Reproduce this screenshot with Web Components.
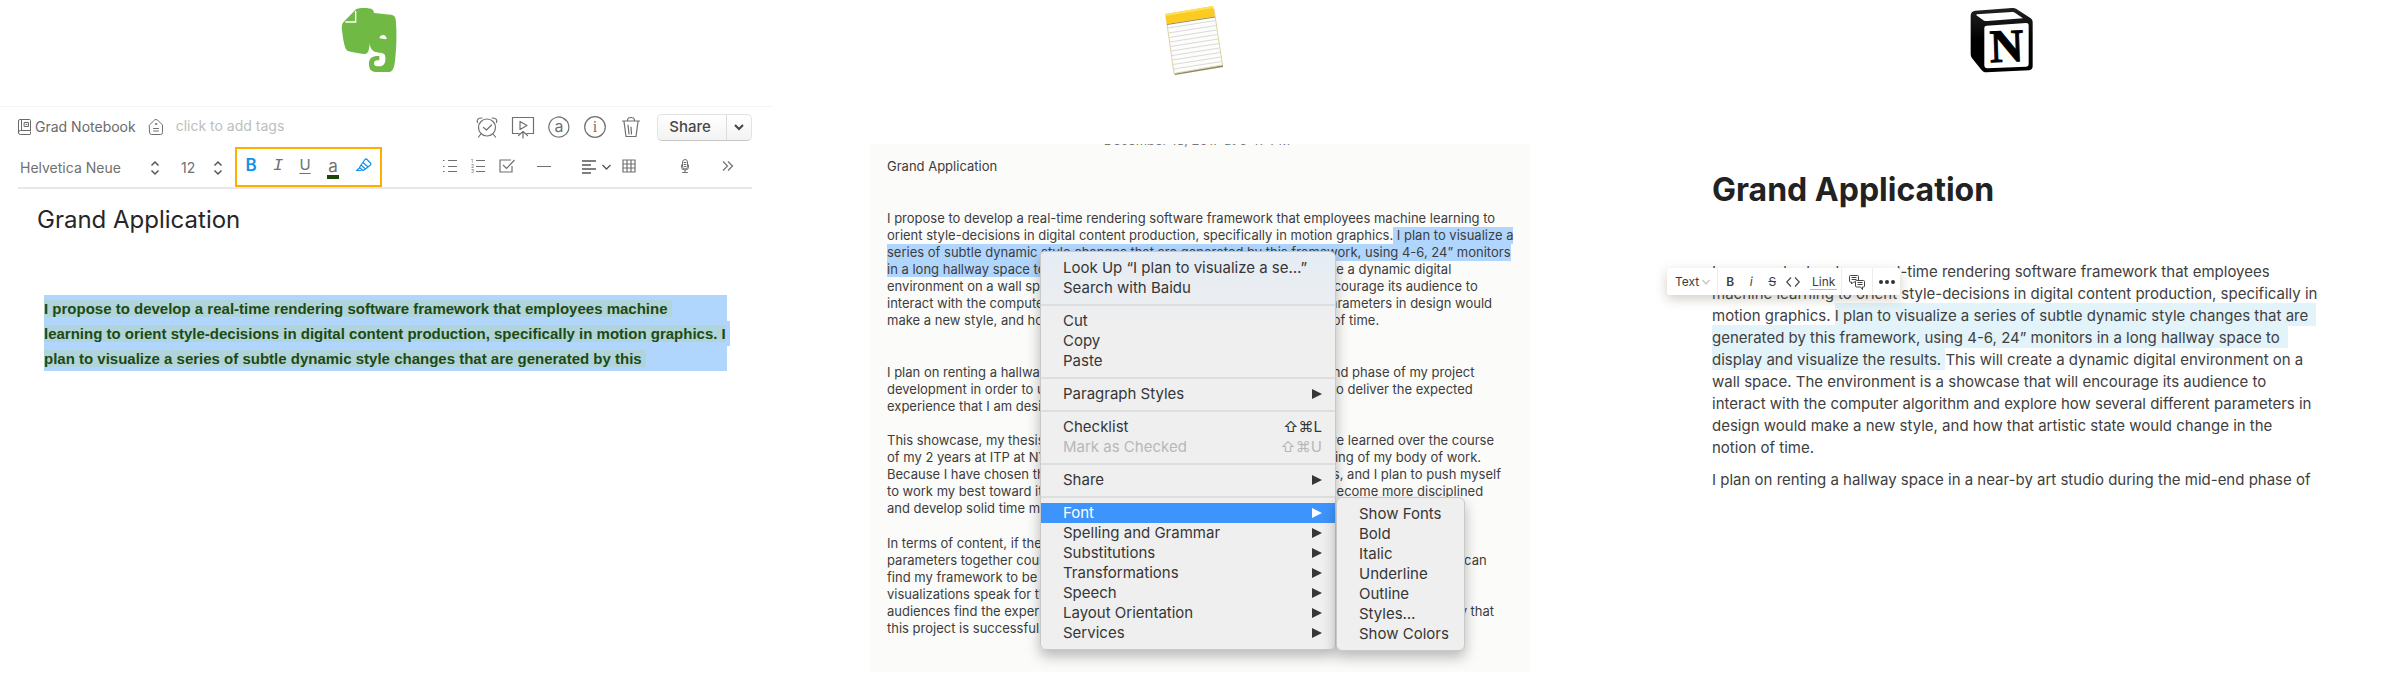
<!DOCTYPE html>
<html lang="en">
<head>
<meta charset="utf-8">
<title>Text formatting in three note apps</title>
<style>
  body { margin: 0; background: #fff; font-family: Inter, "Liberation Sans", sans-serif; color: #333; }
</style>
</head>
<body>
<compare-board>
  <app-column style="--logo-shift: 35px">
    <ui-icon slot="logo" name="evernote"></ui-icon>
    <evernote-pane></evernote-pane>
  </app-column>
  <app-column style="--logo-shift: 10px">
    <ui-icon slot="logo" name="notes"></ui-icon>
    <notes-pane></notes-pane>
  </app-column>
  <app-column style="--logo-shift: 24px">
    <ui-icon slot="logo" name="notion"></ui-icon>
    <notion-pane></notion-pane>
  </app-column>
</compare-board>

<script>
const line = 'fill="none" stroke="currentColor" stroke-linecap="round" stroke-linejoin="round"';
const ICONS = {
  evernote: [58, 66, '60 20 174 198', `
    <path fill="#6fb944" d="M108 27C118 22 150 22 158 28C162 32 161 36 163 38L212 43C224 45 227 50 228 66C230 100 230 135 226 172C223 205 219 215 203 215H172C152 215 147 206 147 190C147 172 158 166 178 167V180C165 179 162 184 162 190C163 196 167 198 174 198C192 199 197 190 196 170C195 160 190 158 178 157C160 155 151 150 149 128C148 146 146 161 134 161C116 160 98 156 84 152C74 148 70 120 67 98C65 82 64 74 70 66Z"/>
    <path fill="none" stroke="#fff" stroke-width="4" d="M76 65H107V32"/>
    <path fill="#fff" d="M178 114C180 100 200 100 200 116C194 118 184 113 178 114Z"/>`],
  notes: [60, 76, '0 3 60 76', `
    <path fill="#8d8768" d="M9 74L58 66L58 68L10 76Z"/>
    <path fill="#fdfdfc" stroke="#dcd3a4" stroke-width="1" d="M1 18L49 10L57.500 66L9 74.500Z"/>
    <path fill="#fbcb1f" d="M0 15L48 7L50 17.500L2 25Z"/>
    <path fill="#ffdf5e" d="M0 15L48 7L48.500 9L.500 17Z"/>
    <path stroke="#dadada" stroke-width="1" d="M3 29L50.500 21.500M3.500 34L51 26.500M4 38.500L51.500 31M5 43L52.500 35.500M5.500 47.500L53 40M6 52L54 44.500M7 56.500L54.500 49M7.500 61L55 53.500M8 65.500L56 58M8.500 70L56.500 62.500"/>
    <path stroke="#9a8c4c" stroke-width="1" d="M2 25.500L50 18"/>`],
  notion: [64, 66, '58 14 192 198', `
    <defs><linearGradient id="side" x1="0" y1="0" x2="0" y2="1"><stop offset="0" stop-color="#222"/><stop offset=".5" stop-color="#000"/></linearGradient></defs>
    <path fill="url(#side)" d="M74 25L184 17C192 17 196 19 202 23L238 46C244 50 246 53 246 60V192C246 199 242 203 235 204L108 210C100 210 96 207 92 202L66 170C61 164 60 160 60 153V40C60 31 65 26 74 25Z"/>
    <path fill="#fff" d="M78 36L184 29C190 29 193 31 197 34L217 48L110 56C103 57 98 55 94 51L77 39Z"/>
    <path fill="#fff" d="M108 70L226 62C232 62 234 64 234 70V184C234 190 231 193 226 193L110 198C104 198 101 195 101 189V78C101 73 103 70 108 70Z"/>
    <text x="117" y="178" font-family="Liberation Serif" font-weight="700" font-size="140" fill="#000" stroke="#000" stroke-width="3" transform="rotate(-2 167 130)">N</text>`],
  notebook: [14, 16, '0 0 14 16', `<g ${line}><path d="M12.500 11.500V1.500Q12.500 .5 11.500 .5H2Q.5 .5 .5 2V13.500M12.500 11.500H2.500Q.5 11.500 .5 13.500Q.5 15.500 2.500 15.500H12M12.500 13V14.500M3.500 .5V11.500"/><path d="M6.500 3.500H10.500V7.500H6.500ZM8 5.500H9"/></g>`],
  tag: [14, 16, '0 0 14 16', `<g ${line}><path d="M.5 6L5.500 1Q7 0 8.500 1L13.500 6V13.500Q13.500 15.500 11.500 15.500H2.500Q.5 15.500 .5 13.500Z"/><path d="M4.500 9.500H9.500M4.500 12H9.500"/><circle cx="7" cy="5" r=".7"/></g>`],
  alarm: [22, 22, '0 0 22 22', `<g ${line} stroke-width="1.200"><circle cx="11" cy="11.500" r="8.500"/><path d="M7.500 11.500L10.500 14L15.500 9M4.500 18.500L2.500 21M17.500 18.500L19.500 21M1.500 6.500Q0 2 6 2M20.500 6.500Q22 2 16 2"/></g>`],
  present: [22, 22, '0 0 22 22', `<g ${line} stroke-width="1.200"><path d="M7 17.500H.5V1.500H21.500V17.500H15M8 5.500V13.500L15 9.500ZM11 22V15.500M6.500 19.500L11 15.500L15.500 19.500"/></g>`],
  at: [22, 22, '0 0 22 22', `<path ${line} stroke-width="1.200" d="M16 2.500A10 10 0 1 1 8 1.500Q13 -.5 18 4.500"/><text x="11" y="16" text-anchor="middle" font-size="16" font-family="Inter" fill="currentColor">a</text>`],
  info: [22, 22, '0 0 22 22', `<circle ${line} stroke-width="1.200" cx="11" cy="11" r="10.300"/><text x="11" y="16" text-anchor="middle" font-size="16" font-family="Liberation Serif" fill="currentColor">i</text>`],
  trash: [22, 22, '0 0 22 22', `<g ${line} stroke-width="1.200"><path d="M2.500 5H19.500M4 5.500L6 20.500H16L18 5.500M7.500 4.500Q7.500 1.500 11 1.500Q14.500 1.500 14.500 4.500M8 9L9 18M11 11L11.500 18"/></g>`],
  caret: [12, 8, '0 0 12 8', `<path fill="none" stroke="#444" stroke-width="2" d="M2 2L6 6L10 2"/>`],
  updown: [8, 14, '0 0 8 14', `<path fill="none" stroke="#555" stroke-width="1.500" d="M.5 4.500L4 1L7.500 4.500M.5 9.500L4 13L7.500 9.500"/>`],
  pen: [16, 14, '0 0 16 14', `<g ${line} stroke-width="1.200"><path d="M9 1.500Q10 .5 11 1.500L14.500 5Q15.500 6 14.500 7L9.500 11L5 7ZM5 7L3.500 9.500L7 12.500L9.500 11M7 4.500L12 9M3.500 10L.5 12.500H5"/></g>`],
  bullets: [14, 14, '0 0 14 14', `<path stroke="currentColor" d="M5 1.500H14M5 7.500H14M5 12.500H14M0 1.500H1.500M0 7.500H1.500M0 12.500H1.500"/>`],
  numbers: [14, 14, '0 0 14 14', `<path stroke="currentColor" d="M5 1.500H14M5 7.500H14M5 12.500H14"/><g font-family="Inter" font-size="5" fill="currentColor"><text x="0" y="4">1</text><text x="0" y="9">2</text><text x="0" y="14">3</text></g>`],
  check: [16, 14, '0 0 16 14', `<path fill="none" stroke="currentColor" stroke-width="1.200" d="M12 1H1V13H13V7M4 6L7.500 9.500L15.500 1"/>`],
  dash: [14, 14, '0 0 14 14', `<path stroke="currentColor" d="M0 7.500H14"/>`],
  align: [30, 14, '0 0 30 14', `<path fill="none" stroke="#555" stroke-width="1.300" d="M0 2H14M0 6H9M0 10H14M0 14H9M20.500 6L24.500 10L28.500 6"/>`],
  table: [14, 14, '0 0 14 14', `<path fill="none" stroke="currentColor" stroke-width="1.200" d="M1 1H13V13H1ZM5 1V13M9 1V13M1 5H13M1 9H13"/>`],
  mic: [8, 14, '0 0 8 14', `<g ${line}><rect x="1.500" y=".5" width="5" height="9.500" rx="2.500"/><path d="M3 3.500H5M3 5.500H5M3 7.500H5M.5 6V8.500Q.5 11 4 11Q7.500 11 7.500 8.500V6M4 11V13.500M1.500 13.500H6.500"/></g>`],
  more: [12, 10, '0 0 12 10', `<path fill="none" stroke="currentColor" stroke-width="1.200" d="M1 .5L5.500 5L1 9.500M6 .5L10.500 5L6 9.500"/>`],
  arrow: [10, 10, '0 0 10 10', `<path fill="currentColor" d="M0 0L10 5L0 10Z"/>`],
  chev: [8, 6, '0 0 8 6', `<path fill="none" stroke="#c4c4c4" stroke-width="1.200" d="M.5 1L4 5L7.500 1"/>`],
  code: [14, 10, '0 0 14 10', `<path fill="none" stroke="#444" stroke-width="1.100" d="M5 .5L.7 5L5 9.500M9 .5L13.300 5L9 9.500"/>`],
  comments: [16, 16, '0 0 16 16', `<g fill="#fff" stroke="#444" stroke-linejoin="round"><path d="M1.500 1.500H8.500Q9.500 1.500 9.500 2.500V7Q9.500 8 8.500 8H4.500L2.500 10V8H1.500Q.5 8 .5 7V2.500Q.5 1.500 1.500 1.500Z"/><path d="M2.500 3.500H7.500M2.500 5.500H7.500"/><path d="M7.500 6.500H14.500Q15.500 6.500 15.500 7.500V12Q15.500 13 14.500 13H13.500V15.500L11.500 13H7.500Q6.500 13 6.500 12V7.500Q6.500 6.500 7.500 6.500Z"/><path d="M8.500 8.500H13.500M8.500 10.500H13.500"/></g>`],
  dots: [16, 4, '0 0 16 4', `<g fill="#333"><circle cx="2" cy="2" r="2"/><circle cx="8" cy="2" r="2"/><circle cx="14" cy="2" r="2"/></g>`],
};

function define(name, html) {
  const template = document.createElement('template');
  template.innerHTML = html;
  customElements.define(name, class extends HTMLElement {
    constructor() {
      super();
      this.attachShadow({ mode: 'open' }).append(template.content.cloneNode(true));
    }
  });
}

customElements.define('ui-icon', class extends HTMLElement {
  connectedCallback() {
    const [w, h, box, body] = ICONS[this.getAttribute('name')];
    const root = this.shadowRoot || this.attachShadow({ mode: 'open' });
    root.innerHTML = `<style>:host{display:inline-flex;flex:none}svg{display:block;overflow:visible}</style>
      <svg width="${w}" height="${h}" viewBox="${box}" aria-hidden="true">${body}</svg>`;
  }
});

define('compare-board', `
<style>
  :host { display: grid; grid-template-columns: 773fr 854fr 773fr; align-items: start; overflow: hidden; }
</style><slot></slot>`);

define('app-column', `
<style>
  :host { display: block; min-width: 0; }
  header { display: flex; justify-content: center; align-items: center; height: 80px; padding-right: var(--logo-shift); }
</style>
<header><slot name="logo"></slot></header><slot></slot>`);

define('evernote-pane', `
<style>
  :host { display: block; margin-top: 26px; border-top: 1px solid #f3f3f3; padding: 0 21px 0 18px; color: #707070; font-size: 14px; line-height: 20px; }
  button { all: unset; display: inline-flex; justify-content: center; align-items: center; cursor: pointer; }
  .row { display: flex; align-items: center; height: 40px; }
  .tools { border-bottom: 2px solid #e8e8e8; }
  .book { color: #6a6a6a; gap: 3px; }
  .tag { margin: 0 13px; }
  input { all: unset; flex: 1; min-width: 0; height: 20px; padding-bottom: 2px; }
  input::placeholder { color: #bdbdbd; opacity: 1; }
  .acts { display: flex; gap: 14px; margin-right: 15px; }
  .share { display: flex; height: 25px; border: 1px solid #e3e3e3; border-bottom-color: #c6c6c6; border-radius: 5px; background: linear-gradient(#fff, #f3f3f3); color: #484848; font-size: 15px; font-weight: 500; }
  .share button { width: 64px; padding-right: 4px; }
  .share button + button { width: 24px; padding-right: 0; border-left: 1px solid #dcdcdc; }
  label { display: flex; align-items: center; padding-top: 2px; }
  label + label { margin-left: 22px; }
  select { all: unset; height: 20px; }
  .font { width: 131px; padding-left: 2px; }
  .size { width: 33px; }
  .format { display: flex; align-items: center; gap: 17px; box-sizing: border-box; width: 147px; height: 40px; margin-left: 13px; padding: 0 0 4px 9px; border: 2px solid #ffae00; font-size: 17px; }
  .format button { width: 10px; height: 24px; }
  .b { font-weight: 600; color: #1590e8; }
  .i { font: italic 17px "Liberation Mono", monospace; }
  .u { text-decoration: underline; text-underline-offset: 3px; font-size: 15px; }
  .format .a { width: 12px; border-bottom: 4px solid #1b4704; height: 18px; margin-top: 6px; font-size: 17px; line-height: 18px; }
  .format .pen { width: 16px; color: #1590e8; }
  .group { display: flex; align-items: center; gap: 14px; margin-left: 61px; padding-bottom: 2px; flex: 1; }
  .dash { margin-left: 8px; } .align { margin-left: 17px; } .grid { margin-left: -4px; } .mic { margin-left: 31px; } .more { margin: 0 18px 0 auto; }
  h1 { margin: 15px 0 59px; padding-left: 19px; font-size: 24px; line-height: 32px; font-weight: 400; color: #262626; }
  p { margin: 0 25px 0 26px; padding-top: 1px; background: #b1d6fe; font: 700 15px/25px "Liberation Sans", Arial, sans-serif; color: #1b4a13; white-space: pre; }
  .l { display: block; width: max-content; min-width: 100%; background: #b1d6fe; }
  mark { background: #b1d4da; color: inherit; }
</style>
<div class="row">
  <button class="book"><ui-icon name="notebook"></ui-icon>Grad Notebook</button>
  <button class="tag" aria-label="Tags"><ui-icon name="tag"></ui-icon></button>
  <input aria-label="Tags" placeholder="click to add tags">
  <div class="acts">
    <button aria-label="Reminder"><ui-icon name="alarm"></ui-icon></button>
    <button aria-label="Present"><ui-icon name="present"></ui-icon></button>
    <button aria-label="Annotate"><ui-icon name="at"></ui-icon></button>
    <button aria-label="Info"><ui-icon name="info"></ui-icon></button>
    <button aria-label="Delete"><ui-icon name="trash"></ui-icon></button>
  </div>
  <div class="share"><button>Share</button><button aria-label="Share options"><ui-icon name="caret"></ui-icon></button></div>
</div>
<div class="row tools">
  <label><select class="font" aria-label="Font"><option>Helvetica Neue</option></select><ui-icon name="updown"></ui-icon></label>
  <label><select class="size" aria-label="Size"><option>12</option></select><ui-icon name="updown"></ui-icon></label>
  <div class="format">
    <button class="b">B</button><button class="i">I</button><button class="u">U</button><button class="a">a</button><button class="pen" aria-label="Highlight"><ui-icon name="pen"></ui-icon></button>
  </div>
  <div class="group">
    <button aria-label="Bulleted list"><ui-icon name="bullets"></ui-icon></button>
    <button aria-label="Numbered list"><ui-icon name="numbers"></ui-icon></button>
    <button aria-label="Checkbox"><ui-icon name="check"></ui-icon></button>
    <button class="dash" aria-label="Rule"><ui-icon name="dash"></ui-icon></button>
    <button class="align" aria-label="Alignment"><ui-icon name="align"></ui-icon></button>
    <button class="grid" aria-label="Table"><ui-icon name="table"></ui-icon></button>
    <button class="mic" aria-label="Record"><ui-icon name="mic"></ui-icon></button>
    <button class="more" aria-label="More"><ui-icon name="more"></ui-icon></button>
  </div>
</div>
<h1>Grand Application</h1>
<p><span class="l"><mark>I propose to develop a real-time rendering software framework that employees machine </mark></span><span class="l"><mark>learning to orient style-decisions in digital content production, specifically in motion graphics. I</mark> </span><span class="l"><mark>plan to visualize a series of subtle dynamic style changes that are generated by this </mark></span></p>`);

define('menu-item', `
<style>
  :host { display: block; }
  button { all: unset; box-sizing: border-box; display: flex; align-items: center; width: 100%; height: 20px; padding: 0 13px 0 22px; font-size: 15px; line-height: 20px; white-space: nowrap; color: inherit; }
  span { flex: 1; }
  :host([active]) { background: #3e94fd; color: #fff; }
  :host([disabled]) { color: #b8b8b8; }
</style>
<button role="menuitem"><span><slot></slot></span><slot name="end"></slot></button>`);

define('context-menu', `
<style>
  :host { display: block; box-sizing: border-box; padding: 6px 0; border: 1px solid #c9c9c9; border-radius: 6px; background: #efefef; color: #363636; box-shadow: 0 6px 14px rgba(0, 0, 0, .28); }
  ::slotted(hr) { margin: 6px 0 5px; border: 0; border-top: 2px solid #dedede; }
</style><slot></slot>`);

define('notes-pane', `
<style>
  :host { display: block; position: relative; margin: 64px 97px 0; }
  .card { height: 528px; overflow: hidden; box-sizing: border-box; padding: 0 23px 0 17px; background: #fbfbf9; color: #3d3d3d; font-size: 13px; line-height: 17px; white-space: pre; }
  time { display: block; margin: -12px 0 9px; text-align: center; color: #777; }
  h2, p { margin: 0 0 35px; font-size: 13px; font-weight: 400; }
  .p3 { margin-bottom: 18px; }
  .p2 { margin-bottom: 17px; }
  .l { display: flex; }
  .l mark { flex: 1; }
  mark { background: #b1d6fe; color: inherit; }
  .menu { position: absolute; left: 170px; top: 107px; width: 296px; background: linear-gradient(#e5ecf4, #ebeef1 50px, #efefef 80px); border-top-left-radius: 4px; }
  .sub { position: absolute; left: 466px; top: 353px; width: 129px; }
  hr { display: block; }
</style>
<article class="card"><time>December 18, 2017 at 5:47 PM</time><h2>Grand Application</h2><p><span class="l">I propose to develop a real-time rendering software framework that employees machine learning to</span><span class="l">orient style-decisions in digital content production, specifically in motion graphics.<mark> I plan to visualize a</mark></span><span class="l"><mark>series of subtle dynamic style changes that are generated by this framework, using 4-6, 24” monitors</mark></span><span><mark>in a long hallway space to display and visualize the results.</mark> This will create a dynamic digital
environment on a wall space. The environment is a showcase that will encourage its audience to
interact with the computer algorithm and explore how several different parameters in design would
make a new style, and how that artistic state would change in the notion of time.</span></p><p class="p2">I plan on renting a hallway space in a near-by art studio during the mid-end phase of my project
development in order to utilize the space to its whole extent and be able to deliver the expected
experience that I am designing.</p><p class="p3">This showcase, my thesis project, shall be the culmination of all that I have learned over the course
of my 2 years at ITP at NYU, and it will also serve as a meaningful beginning of my body of work.
Because I have chosen the hardest path among all of the possible options, and I plan to push myself
to work my best toward it, and I believe that this process will help me to become more disciplined
and develop solid time management.</p><p class="p4">In terms of content, if the visuals, the sound and the interaction of all the thoroughly different
parameters together could create an immersive and so convincing experience that the viewer can
find my framework to be interesting.
visualizations speak for themselves, without the need for more further explanation, so that the
audiences find the experience to be so entertaining and meaningful, then I can confidently say that
this project is successful.</p></article>
<context-menu class="menu" role="menu">
  <menu-item>Look Up “I plan to visualize a se…”</menu-item>
  <menu-item>Search with Baidu</menu-item><hr>
  <menu-item>Cut</menu-item><menu-item>Copy</menu-item><menu-item>Paste</menu-item><hr>
  <menu-item>Paragraph Styles<ui-icon slot="end" name="arrow"></ui-icon></menu-item><hr>
  <menu-item>Checklist<span slot="end">⇧⌘L</span></menu-item>
  <menu-item disabled>Mark as Checked<span slot="end">⇧⌘U</span></menu-item><hr>
  <menu-item>Share<ui-icon slot="end" name="arrow"></ui-icon></menu-item><hr>
  <menu-item active>Font<ui-icon slot="end" name="arrow"></ui-icon></menu-item>
  <menu-item>Spelling and Grammar<ui-icon slot="end" name="arrow"></ui-icon></menu-item>
  <menu-item>Substitutions<ui-icon slot="end" name="arrow"></ui-icon></menu-item>
  <menu-item>Transformations<ui-icon slot="end" name="arrow"></ui-icon></menu-item>
  <menu-item>Speech<ui-icon slot="end" name="arrow"></ui-icon></menu-item>
  <menu-item>Layout Orientation<ui-icon slot="end" name="arrow"></ui-icon></menu-item>
  <menu-item>Services<ui-icon slot="end" name="arrow"></ui-icon></menu-item>
</context-menu>
<context-menu class="sub" role="menu">
  <menu-item>Show Fonts</menu-item><menu-item>Bold</menu-item><menu-item>Italic</menu-item><menu-item>Underline</menu-item><menu-item>Outline</menu-item><menu-item>Styles…</menu-item><menu-item>Show Colors</menu-item>
</context-menu>`);

define('notion-pane', `
<style>
  :host { display: block; padding: 90px 60px 0 85px; color: #404040; font-size: 15px; line-height: 22px; }
  h1 { margin: 0 0 51px; font-size: 32px; line-height: 40px; font-weight: 700; color: #222; }
  .body { position: relative; white-space: pre; }
  p { margin: 0 0 10px; }
  mark { padding: 3px 0 1px; background: #e2f3f9; color: inherit; }
  .wide { padding-right: 8px; }
  .bar { position: absolute; left: -45px; top: 7px; display: flex; height: 27px; border-radius: 2px; background: #fff; box-shadow: 0 4px 12px rgba(90, 80, 40, .28); white-space: normal; }
  .bar div { display: flex; align-items: center; box-sizing: border-box; height: 27px; }
  .bar div + div { border-left: 1px solid #ededed; }
  button { all: unset; display: flex; align-items: center; justify-content: center; height: 20px; font-size: 12px; line-height: 20px; color: #3c3c3c; }
  .text { gap: 3px; padding: 0 7px 0 8px; }
  .marks button { width: 14px; margin-left: 7px; }
  .marks .b { margin-left: 5px; font-weight: 600; color: #3c3c3c; }
  .marks .link { width: 27px; height: 15px; line-height: 15px; border-bottom: 1px solid #bbb; margin: 0 4px 0 10px; }
  .cm { padding: 0 7px; } .dt { padding: 0 5px 0 6px; }
</style>
<h1>Grand Application</h1>
<div class="body"><p>I propose to develop a real-time rendering software framework that employees
machine learning to orient style-decisions in digital content production, specifically in
motion graphics. <mark class="wide">I plan to visualize a series of subtle dynamic style changes that are</mark>
<mark class="wide">generated by this framework, using 4-6, 24” monitors in a long hallway space to</mark>
<mark>display and visualize the results. </mark>This will create a dynamic digital environment on a
wall space. The environment is a showcase that will encourage its audience to
interact with the computer algorithm and explore how several different parameters in
design would make a new style, and how that artistic state would change in the
notion of time.</p><p>I plan on renting a hallway space in a near-by art studio during the mid-end phase of</p><div class="bar" role="toolbar">
  <div><button class="text">Text<ui-icon name="chev"></ui-icon></button></div>
  <div class="marks"><button class="b">B</button><button><i>i</i></button><button><s>S</s></button><button aria-label="Code"><ui-icon name="code"></ui-icon></button><button class="link">Link</button></div>
  <div class="cm"><button aria-label="Comment"><ui-icon name="comments"></ui-icon></button></div>
  <div class="dt"><button aria-label="More"><ui-icon name="dots"></ui-icon></button></div>
</div></div>`);
</script>
</body>
</html>
